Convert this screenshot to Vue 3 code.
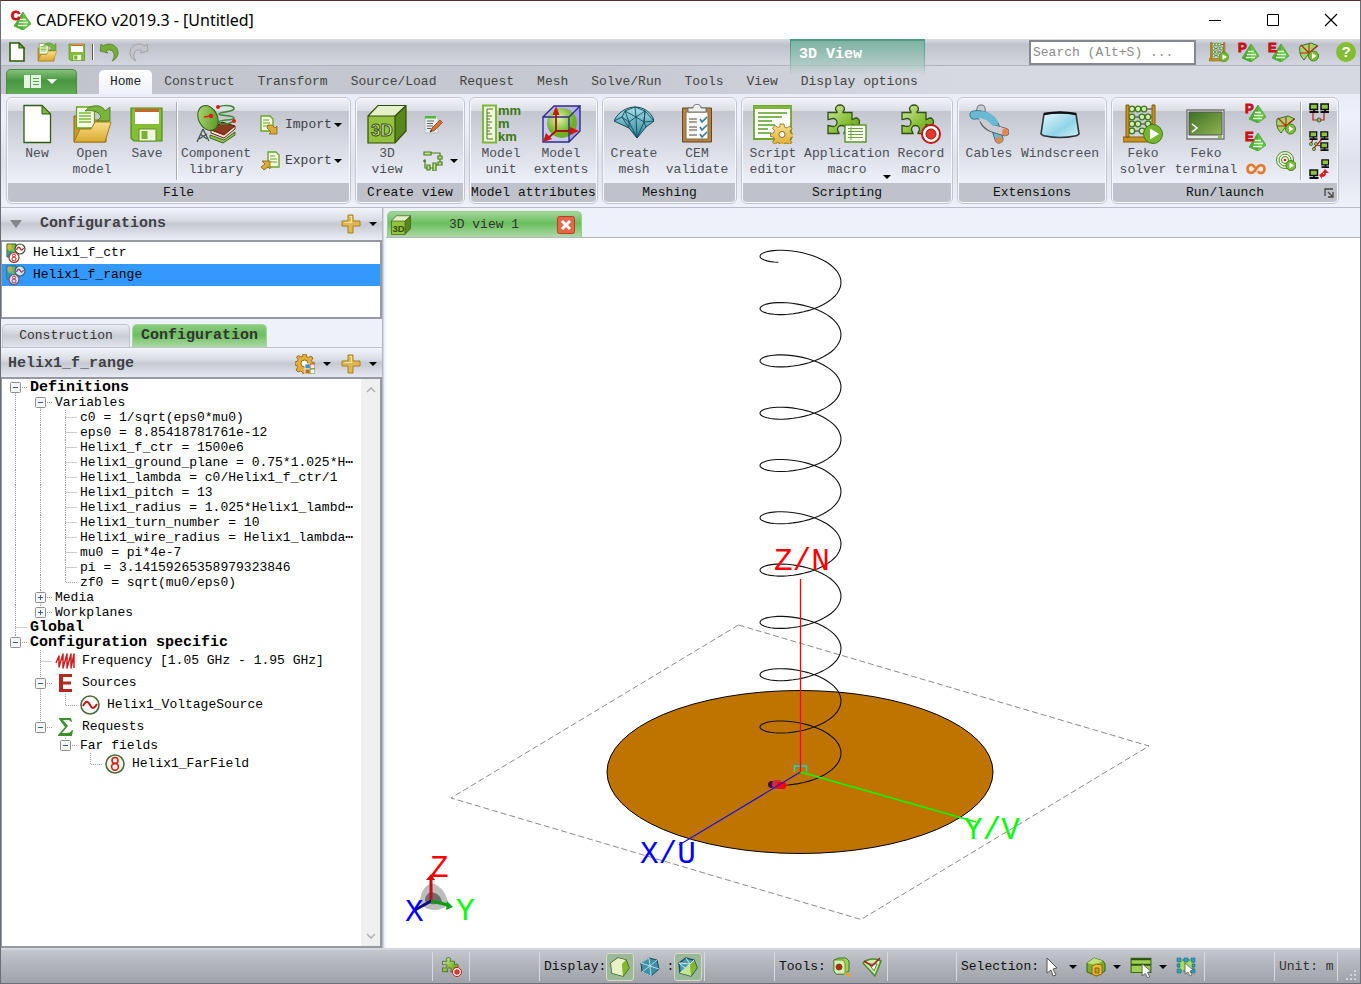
<script setup>
const tabs = ['Home', 'Construct', 'Transform', 'Source/Load', 'Request', 'Mesh', 'Solve/Run', 'Tools', 'View', 'Display options']

const variables = [
  'c0 = 1/sqrt(eps0*mu0)',
  'eps0 = 8.85418781761e-12',
  'Helix1_f_ctr = 1500e6',
  'Helix1_ground_plane = 0.75*1.025*H⋯',
  'Helix1_lambda = c0/Helix1_f_ctr/1',
  'Helix1_pitch = 13',
  'Helix1_radius = 1.025*Helix1_lambd⋯',
  'Helix1_turn_number = 10',
  'Helix1_wire_radius = Helix1_lambda⋯',
  'mu0 = pi*4e-7',
  'pi = 3.14159265358979323846',
  'zf0 = sqrt(mu0/eps0)',
]

// Cell codes: "-" open node, "+" closed node, "|" passing line, "t" branch, "l" last branch, " " blank.
// A suffix after the kind gives the line above (a) and below (b) a node box.
const rows = [
  { cells: ['-b'], text: 'Definitions', bold: true },
  { cells: ['|', '-b'], text: 'Variables' },
  ...variables.map((text, i) => ({ cells: ['|', '|', i === variables.length - 1 ? 'l' : 't'], text })),
  { cells: ['|', '+ab'], text: 'Media' },
  { cells: ['|', '+a'], text: 'Workplanes' },
  { cells: ['t'], text: 'Global', bold: true },
  { cells: ['-a'], text: 'Configuration specific', bold: true },
  { cells: [' ', 't'], text: 'Frequency [1.05 GHz - 1.95 GHz]', icon: 'freq' },
  { cells: [' ', '-ab'], text: 'Sources', icon: 'source' },
  { cells: [' ', '|', 'l'], text: 'Helix1_VoltageSource', icon: 'voltage' },
  { cells: [' ', '-a'], text: 'Requests', icon: 'sigma' },
  { cells: [' ', ' ', '-a'], text: 'Far fields' },
  { cells: [' ', ' ', ' ', 'l'], text: 'Helix1_FarField', icon: 'farfield' },
]

function cellPath(c, h) {
  const m = Math.floor(h / 2) + 0.5
  if (c === ' ') return ''
  if (c === '|') return `M12.5 0V${h}`
  if (c === 't') return `M12.5 0V${h}M12.5 ${m}H24`
  if (c === 'l') return `M12.5 0V${m}H24`
  let d = `M19 ${m}H25`
  if (c.includes('a')) d += `M12.5 0V${m - 6}`
  if (c.includes('b')) d += `M12.5 ${m + 6}V${h}`
  return d
}

const turns = 10
const steps = 48
const points = []
for (let i = 0; i <= turns * steps; i++) {
  const t = i / steps
  const a = ((123 - 360 * t) * Math.PI) / 180
  points.push(`${(800.5 + 40.5 * Math.cos(a)).toFixed(1)},${(771 + 17 * Math.sin(a) - 52.3 * t).toFixed(1)}`)
}
const helix = points.join(' ')
</script>

<template>
  <div class="window">
    <svg class="sprite" aria-hidden="true">
      <defs>
        <linearGradient id="gGreen" x1="0" y1="0" x2="1" y2="1"><stop offset="0" stop-color="#b9de7a" /><stop offset="1" stop-color="#4f8f1c" /></linearGradient>
        <linearGradient id="gPuz" x1="0" y1="0" x2="1" y2="1"><stop offset="0" stop-color="#d3e7a9" /><stop offset=".6" stop-color="#86bd33" /><stop offset="1" stop-color="#5f9a1d" /></linearGradient>
        <linearGradient id="gGold" x1="0" y1="0" x2="0" y2="1"><stop offset="0" stop-color="#f7e08f" /><stop offset="1" stop-color="#dba92c" /></linearGradient>
        <linearGradient id="gTerm" x1="0" y1="0" x2="1" y2="1"><stop offset="0" stop-color="#3f6f24" /><stop offset="1" stop-color="#8fb554" /></linearGradient>
        <linearGradient id="gGlass" x1="0" y1="0" x2="1" y2="1"><stop offset="0" stop-color="#e8f8fc" /><stop offset=".6" stop-color="#8fd4e8" /><stop offset="1" stop-color="#d9f2f8" /></linearGradient>
        <linearGradient id="gDia" x1="0" y1="0" x2="0" y2="1"><stop offset="0" stop-color="#a9dfe9" /><stop offset="1" stop-color="#2c8399" /></linearGradient>
        <radialGradient id="gBall" cx=".4" cy=".35"><stop offset="0" stop-color="#e2f3b0" /><stop offset="1" stop-color="#6fae26" /></radialGradient>
      </defs>
      <symbol id="i-new" viewBox="0 0 40 40"><path d="M7 1.500H25L33.500 10V38.500H7z" fill="#fff" stroke="#2f5c10" stroke-width="1.300" /><path d="M25 1.500V10h8.500z" fill="#7eb83a" stroke="#2f5c10" /></symbol>
      <symbol id="i-newq" viewBox="0 0 20 20"><path d="M3 1h9l5 5v13H3z" fill="#fff" stroke="#2f5c10" stroke-width="1.600" /><path d="M12 1v5h5z" fill="#7eb83a" stroke="#2f5c10" stroke-width="1.200" /></symbol>
      <symbol id="i-open" viewBox="0 0 40 40"><path d="M2 12h7l3 4h22v22H2z" fill="#c59a2d" stroke="#86651a" /><path d="M4.500 3h15l3 3v18h-18z" fill="#f5fae8" stroke="#6aa51e" stroke-width="1.300" /><path d="M7 9h12M7 12h12M7 15h12M7 18h12" stroke="#7fb83a" stroke-width="1.600" /><path d="M13 7C20-1 31 1 33 7l5-4v14H25l4-4c-2-6-9-7-16-6z" fill="#79b43c" stroke="#3f741b" stroke-width=".8" /><path d="M8 25h11l4-7h16l-6 20H2z" fill="url(#gGold)" stroke="#a27818" /></symbol>
      <symbol id="i-save" viewBox="0 0 40 40"><path d="M4 4h31v33H7l-3-3z" fill="#86bd36" stroke="#4f8a19" stroke-width="1.200" /><path d="M8 5h24v15H8z" fill="#fff" /><path d="M8 5h24v3H8z" fill="#c8642c" /><path d="M12 25h17v12H12z" fill="#eef6e0" stroke="#5c961f" /><path d="M14.500 27h6v8h-6z" fill="#7ab230" /></symbol>
      <symbol id="i-complib" viewBox="0 0 40 40"><path d="M15 26l11-8 13 4-11 9z" fill="#8a3a20" stroke="#501c0c" /><path d="M15 26v3l13 5 11-9v-3l-11 9z" fill="#efe4d0" stroke="#70240f" /><path d="M14 31v3l13 5 12-8v-3l-11 8z" fill="#8fc04a" stroke="#3a6a1a" /><path d="M22 3c8-3 17-1 16 2s-15 3-15 5 15 1 15 4-15 1-15 4 10 3 14-1" fill="none" stroke="#3c8a2f" stroke-width="1.600" /><circle cx="22" cy="3" r="2" fill="#d91e1e" /><circle cx="38" cy="17" r="2" fill="#d91e1e" /><ellipse cx="12" cy="14" rx="9.500" ry="13" transform="rotate(-25 12 14)" fill="url(#gGreen)" stroke="#2d5f12" /><path d="M8 13l7-1" stroke="#d21" stroke-width="1.500" /><circle cx="15" cy="12" r="2.200" fill="#d91e1e" /><path d="M7 25L1 38M7 25l6 12M3 35l8-5M11 35l-7-5" stroke="#455" stroke-width="1.300" fill="none" /></symbol>
      <symbol id="i-import" viewBox="0 0 20 20"><path d="M1 1h9l3 3v12H1z" fill="#f2f8e4" stroke="#6da72a" stroke-width="1.400" /><path d="M3 5h6M3 8h7M3 11h5" stroke="#6da72a" /><path d="M8 10h4l3 3 2-2v8H9l2-2-4-4z" fill="#e0a92f" stroke="#80601a" stroke-width=".8" /></symbol>
      <symbol id="i-export" viewBox="0 0 20 20"><path d="M8 1h8l3 3v12H8z" fill="#f2f8e4" stroke="#6da72a" stroke-width="1.400" /><path d="M10 5h5M10 8h7M10 11h7" stroke="#6da72a" /><path d="M2 10h8v8l-2-2-4 3-3-3 4-3z" fill="#e0a92f" stroke="#80601a" stroke-width=".8" /></symbol>
      <symbol id="i-3d" viewBox="0 0 40 40"><path d="M1 12h27v27H1z" fill="#95c13e" /><path d="M1 12L11 1.500h28L28 12z" fill="#e4f0c8" /><path d="M28 12L39 1.500V27L28 39z" fill="#5b861b" /><path d="M1 12L11 1.500h28V27L28 39H1zM1 12h27v27M28 12L39 1.500" fill="none" stroke="#2f4d0c" stroke-width="1.200" /></symbol>
      <symbol id="i-edit" viewBox="0 0 20 20"><path d="M2 2h13v16H2z" fill="#e8ebee" stroke="#b9bdc5" /><path d="M2 1h11v2.500H2z" fill="#4fb83a" /><path d="M4 6h7M4 8.500h6M4 11h6M4 13.500h4" stroke="#666" /><path d="M7 17l2-4 8-8 2.500 2.500-8 8z" fill="#d8702b" stroke="#7d3d14" stroke-width=".7" /><path d="M7 17l1-2 1 1z" fill="#222" /></symbol>
      <symbol id="i-schem" viewBox="0 0 20 20"><g fill="#c5e28f" stroke="#4b7d1a" stroke-width="1.200"><path d="M1 1h7v3H1zM15 5h4v3h-4zM15 11h4v3h-4zM4 14h3v5H4zM10 12h3v8h-3z" /><path d="M8 2h9v3M17 8v3M1 9h1v8h2M7 17h3M13 14h2" fill="none" /></g><circle cx="1.500" cy="10" r="1.300" fill="#4b7d1a" /></symbol>
      <symbol id="i-unit" viewBox="0 0 40 40"><path d="M2 1.500h13v37H2z" fill="#f0f7df" stroke="#7eb73a" stroke-width="2" /><path d="M6 5v30M6 5h6M6 9h3M6 12h5M6 15h3M6 18h5M6 21h3M6 24h5M6 27h3M6 30h5M6 35h6" stroke="#4b7d1a" fill="none" /></symbol>
      <symbol id="i-extents" viewBox="0 0 40 40"><path d="M2 13L13 2h26L28 13z" fill="#b9b6ee" /><path d="M28 13L39 2v25L28 38z" fill="#a5a2e6" /><path d="M2 13h26v25H2z" fill="#c9c8f2" /><circle cx="21" cy="19" r="15" fill="url(#gBall)" /><path d="M2 13h26v25H2zM2 13L13 2h26L28 13M39 2v25L28 38" fill="none" stroke="#2f2b8c" stroke-width="1.400" /><path d="M15 27V6M15 27h17M15 27L5 36" stroke="#a5140c" stroke-width="1.800" /><path d="M15 2l-3.500 9h7zM38 27l-9-4v8zM2 38l3-9 6 6z" fill="#c9180e" /></symbol>
      <symbol id="i-diamond" viewBox="0 0 40 40"><path d="M0 17C4 8 13 3 21 3s17 5 19 14L32 23 23 34 15 24z" fill="url(#gDia)" stroke="#114b5c" /><path d="M0 17l8-4 7 5 7-5 8 5 10-1M8 13l3-6 11 6 9-6-1 11M11 7l10-4 10 4M15 24V18l8 16 7-16 2 5M22 13l1 21M11 7l4 11M8 13l7 11M30 18l1-11 9 10M21 3l1 10" fill="none" stroke="#114b5c" stroke-width=".9" /></symbol>
      <symbol id="i-clip" viewBox="0 0 40 40"><path d="M5.500 4h29v34h-29z" fill="#b28247" stroke="#694518" /><path d="M9 8h22v27H9z" fill="#fafafa" stroke="#8a6a3c" /><path d="M11 4h5c0-5 8-5 8 0h5v4H11z" fill="#eee" stroke="#6e6e6e" /><path d="M12 15h8M12 18h8M12 23h8M12 26h8M12 31h8" stroke="#8a857c" stroke-width="1.400" /><path d="M23 15l2 3 5-5M23 23l2 3 5-5M23 30l2 3 5-5" fill="none" stroke="#2f8094" stroke-width="1.700" /></symbol>
      <symbol id="i-script" viewBox="0 0 40 40"><path d="M1 2h37v33H1z" fill="#fff" stroke="#6da72a" stroke-width="1.800" /><path d="M1 2h37v3H1z" fill="#7db63a" /><path d="M5 9h29M5 13h24M5 17h14M5 21h17M5 25h10M5 29h13" stroke="#5d9a25" stroke-width="1.500" /><g transform="translate(29 30)"><path d="M-2-10h4l.500 3 2.500 1 2.500-2 2.500 2.500-2 2.500 1 2.500 3 .500v3l-3 .500-1 2.500 2 2.500-2.500 2-3-1.500-2 .500-.500 3h-3l-1-3-2.500-1-2.500 2-2.500-2.500 2-2.500-1-2.500-3-.500v-3l3-.500 1-2.500-2-2.500 2.500-2.500 3 2 2-1z" fill="url(#gGold)" stroke="#8a651a" stroke-width=".8" /><circle cx="0" cy=".500" r="3" fill="#fff" stroke="#8a651a" /></g></symbol>
      <symbol id="p-puzzle" viewBox="0 0 40 40"><path d="M1 8.500H10C10 7 8.500 6.500 8.500 5a4.500 4 0 0 1 9 0c0 1.500-1.500 2-1.500 3.500h9v7c2 0 2-1.500 4-1.500a3.500 4 0 0 1 0 8c-2 0-2-1.500-4-1.500v9h-8c0-2 1.500-2 1.500-4a4 4 0 0 0-8 0c0 2 1.500 2 1.500 4H1v-8c3 0 3 1 5 1a4 4 0 0 0 0-8c-2 0-2 1-5 1z" fill="url(#gPuz)" stroke="#2f4f14" stroke-width="1.300" /></symbol>
      <symbol id="i-app" viewBox="0 0 40 40"><use href="#p-puzzle" /><path d="M18 21h21v17H18z" fill="#fbfdf5" stroke="#5f962a" stroke-width="1.500" /><path d="M21 24.500h15M21 27.500h15M21 30.500h15M21 33.500h15M24 23v13" stroke="#6da338" /></symbol>
      <symbol id="i-record" viewBox="0 0 40 40"><use href="#p-puzzle" /><circle cx="30" cy="30" r="9" fill="#fff" stroke="#c31515" stroke-width="2" /><circle cx="30" cy="30" r="5" fill="#e03a30" stroke="#a81010" /></symbol>
      <symbol id="i-cables" viewBox="0 0 40 40"><g fill="none" stroke-linecap="round"><path d="M12 5v6" stroke="#555" stroke-width="9" /><path d="M12 5v6" stroke="#c9ccd0" stroke-width="7.500" /><path d="M5 11c12-1 15 3 21 11l4 13" stroke="#1b637c" stroke-width="9" /><path d="M5 11c12-1 15 3 21 11l4 13" stroke="#68b9d2" stroke-width="7.500" /><path d="M15 17c4 8 12 8 21 11" stroke="#555" stroke-width="8.500" /><path d="M14 15c5 10 13 10 22 13" stroke="#c9ccd0" stroke-width="7" /><path d="M14 11c5 1 8 3 11 7" stroke="#68b9d2" stroke-width="7.500" /></g><ellipse cx="36" cy="28" rx="3" ry="3.500" fill="#ef8343" /><ellipse cx="30" cy="36" rx="3.500" ry="3" fill="#ef8343" /></symbol>
      <symbol id="i-wind" viewBox="0 0 40 40"><path d="M4 10q16-3 32 0l3 20q-2 2-4 2-15 3-30 0-2 0-4-2z" fill="url(#gGlass)" stroke="#2f3335" stroke-width="1.600" /><path d="M4 10q16-3 32 0" stroke="#111" stroke-width="2.400" fill="none" /></symbol>
      <symbol id="i-abacus" viewBox="0 0 40 40"><path d="M4 5h26M4 13h26M4 20h26M4 27h26" stroke="#333" stroke-width="1.200" /><g fill="#d4e8b4" stroke="#3f7a1c" stroke-width="1.300"><circle cx="9" cy="5" r="2.800" /><circle cx="15" cy="5" r="2.800" /><circle cx="21" cy="5" r="2.800" /><circle cx="9" cy="13" r="2.800" /><circle cx="19" cy="13" r="2.800" /><circle cx="25" cy="13" r="2.800" /><circle cx="9" cy="20" r="2.800" /><circle cx="15" cy="20" r="2.800" /><circle cx="25" cy="20" r="2.800" /><circle cx="9" cy="27" r="2.800" /><circle cx="19" cy="27" r="2.800" /></g><path d="M3 1h3v32H3zM29 1h3v32h-3zM0 33h32v5H0z" fill="#c69320" stroke="#7e5c10" /><circle cx="30" cy="30" r="9.500" fill="#78b52e" stroke="#3f7a1c" /><path d="M27 24.500v11l9-5.500z" fill="#fff" /></symbol>
      <symbol id="i-term" viewBox="0 0 40 40"><path d="M1 6h37v29H1z" fill="#e6e8e6" stroke="#777" stroke-width="1.400" /><path d="M3 8h33v23H3z" fill="url(#gTerm)" stroke="#555" /><path d="M6 20l5 4-5 4" fill="none" stroke="#fff" stroke-width="1.600" /><path d="M32 33h4" stroke="#6db32a" stroke-width="1.500" /></symbol>
      <symbol id="p-pyr" viewBox="0 0 20 20"><path d="M12 2l8 12-8 6-9-4z" fill="#67c443" stroke="#2f8f24" stroke-width=".6" /><path d="M12 2v18l-9-4z" fill="#4fae36" /><path d="M9 9.500h6M8 12.500h9M7 15.500h9" stroke="#e6f9dc" stroke-width="1.400" /></symbol>
      <symbol id="i-optf" viewBox="0 0 20 20"><path d="M1 4l11-3 7 3-8 6-6 8C1 14 0 9 1 4z" fill="#a6d46b" stroke="#3d6f1c" /><path d="M2 3l8 8M10 11V2M10 11H1M10 11l8-7" stroke="#c0231a" stroke-width="1.100" /><circle cx="14.500" cy="14" r="5" fill="#7ebb3a" stroke="#47801c" /><path d="M13 11v6l4.500-3z" fill="#fff" /></symbol>
      <symbol id="i-rings" viewBox="0 0 20 20"><g fill="#eef7e2" stroke="#4d8a2a"><circle cx="9" cy="9" r="8.500" /><circle cx="9" cy="9" r="6" /><circle cx="9" cy="9" r="3.500" /></g><circle cx="9" cy="9" r="1.300" fill="#d22" /><circle cx="15" cy="14.500" r="5" fill="#7ebb3a" stroke="#47801c" /><path d="M13.500 11.500v6l4.500-3z" fill="#fff" /></symbol>
      <symbol id="i-loop" viewBox="0 0 20 20"><path d="M8.500 8C6 4 1.500 6 1.500 10s5 6 8.500 0 8.500-4 8.500 0c0 4-4 5-6 3" fill="none" stroke="#e5792a" stroke-width="2.600" stroke-linecap="round" /></symbol>
      <symbol id="p-pc" viewBox="0 0 10 10"><path d="M1 1h7.500v5.500H1z" fill="#8cc63f" stroke="#111" stroke-width="1.500" /><path d="M.500 9h9M5 6v3" stroke="#111" stroke-width="1.800" /></symbol>
      <symbol id="i-net1" viewBox="0 0 20 20"><path d="M4 9v8h11V9" fill="none" stroke="#b81d1d" stroke-width="1.200" /><use href="#p-pc" width="10" height="10" /><use href="#p-pc" x="11" width="10" height="10" /><circle cx="10" cy="17" r="2" fill="#8cc63f" stroke="#333" stroke-width=".8" /></symbol>
      <symbol id="i-net2" viewBox="0 0 20 20"><path d="M4 8L2 13M4 18l10-11M8 14l8 2" stroke="#b81d1d" stroke-width="1.200" /><use href="#p-pc" width="9" height="9" /><use href="#p-pc" x="11" width="9" height="9" /><use href="#p-pc" x="11" y="11" width="9" height="9" /><circle cx="2" cy="13" r="1.600" fill="#8cc63f" stroke="#333" stroke-width=".6" /><circle cx="5" cy="18" r="1.600" fill="#8cc63f" stroke="#333" stroke-width=".6" /><circle cx="7" cy="13" r="1.600" fill="#8cc63f" stroke="#333" stroke-width=".6" /></symbol>
      <symbol id="i-net3" viewBox="0 0 20 20"><use href="#p-pc" x="12" width="9" height="9" /><use href="#p-pc" y="10" width="10" height="10" /><path d="M16 10l4 4h-3c0 3-2 4-4 4v2l-3-4 4-3v2c1 0 1-1 1-1h-2z" fill="#d5202a" /></symbol>
      <symbol id="i-undo" viewBox="0 0 20 20"><path d="M1 9L2 2l2 2c7-5 16 0 15 8-1 4-3 6-6 7 3-4 3-10-2-11-2 0-3 0-4 1l2 2z" fill="#77ab35" stroke="#3f7018" stroke-width=".6" /></symbol>
      <symbol id="i-redo" viewBox="0 0 20 20"><path d="M19 9l-1-7-2 2C9-1 0 4 1 12c1 4 3 6 6 7-3-4-3-10 2-11 2 0 3 0 4 1l-2 2z" fill="#c3c4c7" stroke="#9a9b9e" stroke-width=".8" /></symbol>
      <symbol id="i-plus" viewBox="0 0 20 20"><path d="M7 1h5v6h7v5h-7v7H7v-7H1V7h6z" fill="#e1b850" stroke="#a67f22" /><path d="M8.500 2.500h2v6h-7" fill="none" stroke="#f6e2a2" stroke-width="1.200" /></symbol>
      <symbol id="i-gear" viewBox="0 0 20 20"><path d="M8 0h3l.500 2.500 2 1L16 2l2 2-1.500 2.500 1 2L20 9v3l-2.500.500-1 2L18 17l-2 2-2.500-1.500-2 1L11 20H8l-.500-2-2-1L3 18l-2-2 1.500-2.500L2 11.500 0 11V8l2-.500 1-2L1.500 3 3.500 1.500 6 3l1.500-.500z" fill="#e2b03a" stroke="#8a641a" stroke-width=".9" /><circle cx="9.500" cy="9.500" r="3.500" fill="#fff" stroke="#8a641a" /><path d="M10 10h5v5h-5z" fill="#3492c8" stroke="#fff" stroke-width=".8" /><path d="M15 10h5v5h-5z" fill="#eee" stroke="#d05020" /><path d="M10 15h5v5h-5z" fill="#c8691e" stroke="#fff" stroke-width=".8" /><path d="M15 15h5v5h-5z" fill="#fff" stroke="#4ea52a" /></symbol>
      <symbol id="i-config" viewBox="0 0 20 20"><path d="M1 1h9v13H1z" fill="#7bc043" stroke="#1c5c2a" /><path d="M1.500 1.500h4v5h-4z" fill="#e8b62a" /><path d="M1.500 8h5v6h-5z" fill="#2f9ca5" /><circle cx="14" cy="6" r="5" fill="#fff" stroke="#35502f" stroke-width="1.200" /><path d="M10.500 7c1.500-4 3-3 4-1s2 1 3-1" fill="none" stroke="#d02020" stroke-width="1.300" /><circle cx="8" cy="14.500" r="5" fill="#fff" stroke="#a33328" stroke-width="1.200" /><circle cx="8" cy="12.500" r="1.500" fill="none" stroke="#d02020" /><circle cx="8" cy="16" r="2" fill="none" stroke="#d02020" /></symbol>
      <symbol id="i-freq" viewBox="0 0 20 20"><path d="M1 12l3-7v11L8 3v14l4-14v14l4-14v14l3-14v14" fill="none" stroke="#cf1f1f" stroke-width="1.500" stroke-linejoin="round" /></symbol>
      <symbol id="i-source" viewBox="0 0 20 20"><path d="M4 1h13v3H8v4.500h8v3H8V16h9v3H4z" fill="#b0281f" /></symbol>
      <symbol id="i-voltage" viewBox="0 0 20 20"><circle cx="10" cy="10" r="9" fill="#fdfdfb" stroke="#4d6a3a" stroke-width="1.600" /><path d="M3 11c3-6 5-5 7-1s4 4 7-1" fill="none" stroke="#c8181b" stroke-width="2" /></symbol>
      <symbol id="i-sigma" viewBox="0 0 20 20"><path d="M4 1h12l1 4h-1c-1-2-2-2-8-2l5 6-6 7c8 0 8 0 10-3h1l-1 6H3v-1l7-8-6-8z" fill="#3c8f2a" /></symbol>
      <symbol id="i-farfield" viewBox="0 0 20 20"><circle cx="10" cy="10" r="9" fill="#f3f8e6" stroke="#4d6a3a" stroke-width="1.600" /><circle cx="10" cy="6.500" r="3" fill="none" stroke="#cf1f1f" stroke-width="1.600" /><circle cx="10" cy="12.800" r="3.400" fill="none" stroke="#cf1f1f" stroke-width="1.600" /></symbol>
      <symbol id="i-solid" viewBox="0 0 20 20"><path d="M1 6l7-5 8 2 3 8-6 8-11-3z" fill="#9ccb4b" stroke="#3b5c17" stroke-width="1.400" /><path d="M1 6l7-5 8 2-4 4 1 12-11-3z" fill="#e6f3c6" /><path d="M16 3l3 8-6 8-1-12z" fill="#84b82f" /></symbol>
      <symbol id="i-meshs" viewBox="0 0 20 20"><path d="M1 6l8-5 8 2 2 9-8 7-9-4z" fill="#3f90a6" stroke="#12485a" /><path d="M1 6l9 3 7-6M10 9l1 10M9 1l1 8-8 6M10 9l9 3M9 1L1 6M2 15l9 4" fill="none" stroke="#bfe3ea" stroke-width=".9" /></symbol>
      <symbol id="i-mixed" viewBox="0 0 20 20"><path d="M1 6l7-5 8 2 3 8-6 8-11-3z" fill="#4d9bb0" stroke="#1d4d58" stroke-width="1.400" /><path d="M16 3l3 8-6 8-1-12z" fill="#84b82f" /><path d="M12 7L2 16l11 3z" fill="#c6e48c" /><path d="M1 6l11 1 4-4M8 1l4 6-10 9M1 6l6 5" fill="none" stroke="#dcf0f3" stroke-width=".9" /></symbol>
      <symbol id="i-tape" viewBox="0 0 20 20"><path d="M2 3l5-2h7l3 3v10l-6 3H4l-2-3z" fill="#9fd052" stroke="#3f7a1c" /><path d="M2 3h9l2 3v11H4l-2-3z" fill="#d7edb4" stroke="#3f7a1c" stroke-width=".7" /><circle cx="7" cy="10" r="3" fill="#c81c1c" stroke="#650" /><path d="M13 16l6 3" stroke="#e0a72c" stroke-width="2.500" /></symbol>
      <symbol id="i-angle" viewBox="0 0 20 20"><path d="M1 6c5-5 13-5 18-2l-6 15z" fill="#d4ecae" stroke="#4d8a2a" stroke-width="1.500" /><path d="M7 7h8l-3 7z" fill="#fff" stroke="#4d8a2a" /><path d="M2 4l8 5 8-8" fill="none" stroke="#a32020" stroke-width="1.500" /></symbol>
      <symbol id="i-cursor" viewBox="0 0 20 20"><path d="M5 1v15l4-3 2 6 3-1-3-6 4-1z" fill="#fff" stroke="#555" /></symbol>
      <symbol id="i-boxes" viewBox="0 0 20 20"><path d="M1 6l7-5 9 3 2 3v7l-8 5-10-4z" fill="#79b32a" stroke="#3b5c17" /><path d="M1 6l7-5 9 3-8 4z" fill="#bde27c" /><path d="M6 9l4-2 6 1v9l-6 2-4-2z" fill="#e8bd35" stroke="#8a651a" /><path d="M9 11h4v5H9z" fill="#c99a22" stroke="#8a651a" /></symbol>
      <symbol id="i-table" viewBox="0 0 20 20"><path d="M1 2h18v13H1z" fill="#9fd052" stroke="#3b6b17" /><path d="M1 3h18M1 8h18" stroke="#2c5212" stroke-width="1.800" /><path d="M11 7v11l3-2 2 4 2-1-2-4 3-1z" fill="#fff" stroke="#555" stroke-width=".8" /></symbol>
      <symbol id="i-region" viewBox="0 0 20 20"><path d="M3 3h14v11H3z" fill="#a9d968" stroke="#3f7a1c" stroke-dasharray="2 1" /><g fill="#2ba4c4" stroke="#125c70" stroke-width=".5"><path d="M1 1h4v4H1zM8 1h4v4H8zM15 1h4v4h-4zM1 12h4v4H1zM15 12h4v4h-4zM1 7h3v3H1zM16 7h3v3h-3z" /></g><path d="M9 6v11l3-2 2 4 2-1-2-4 3-1z" fill="#fff" stroke="#555" stroke-width=".8" /></symbol>
    </svg>

    <header class="title">
      <svg class="s20" viewBox="0 0 20 20"><use href="#p-pyr" /><text class="letter" x="0" y="10">C</text></svg>
      <h1>CADFEKO v2019.3 - [Untitled]</h1>
      <div class="winbtns">
        <button aria-label="Minimise"><svg width="14" height="14"><path d="M1 7.500h12" stroke="#000" /></svg></button>
        <button aria-label="Maximise"><svg width="14" height="14"><path d="M1.500 1.500h11v11h-11z" fill="none" stroke="#000" /></svg></button>
        <button aria-label="Close"><svg width="14" height="14"><path d="M1 1l12 12M13 1L1 13" stroke="#000" stroke-width="1.200" /></svg></button>
      </div>
    </header>

    <div class="quick">
      <button aria-label="New"><svg class="s20"><use href="#i-newq" /></svg></button>
      <button aria-label="Open"><svg class="s20"><use href="#i-open" /></svg></button>
      <button aria-label="Save"><svg class="s20"><use href="#i-save" /></svg></button>
      <i class="bar"></i>
      <button aria-label="Undo"><svg class="s20"><use href="#i-undo" /></svg></button>
      <button aria-label="Redo"><svg class="s20"><use href="#i-redo" /></svg></button>
      <div class="qright">
        <input type="search" placeholder="Search (Alt+S) ..." aria-label="Search" />
        <button aria-label="Feko solver"><svg class="s20"><use href="#i-abacus" /></svg></button>
        <button aria-label="Postfeko"><svg class="s20" viewBox="0 0 20 20"><use href="#p-pyr" /><text class="letter" x="-1" y="10">P</text></svg></button>
        <button aria-label="Editfeko"><svg class="s20" viewBox="0 0 20 20"><use href="#p-pyr" /><text class="letter" x="-1" y="10">E</text></svg></button>
        <button aria-label="Optfeko"><svg class="s20"><use href="#i-optf" /></svg></button>
        <button class="help" aria-label="Help">?</button>
      </div>
      <div class="context">3D View</div>
    </div>

    <nav class="tabs">
      <button class="appmenu" aria-label="Application menu">
        <svg width="34" height="16"><path d="M1 1h17v13H1z" fill="#e5f4e2" /><path d="M7.500 1v13M10 4.500h6M10 7.500h6M10 10.500h6" stroke="#5aa354" fill="none" /><path d="M24 5h10l-5 5z" fill="#fff" /></svg>
      </button>
      <button v-for="(t, i) in tabs" :key="t" class="tab" :class="{ on: i === 0 }">{{ t }}</button>
    </nav>

    <section class="ribbon">
      <div class="group file">
        <div class="body">
          <button class="big w58"><svg class="s40"><use href="#i-new" /></svg>New</button>
          <button class="big w52"><svg class="s40"><use href="#i-open" /></svg>Open<br />model</button>
          <button class="big w58"><svg class="s40"><use href="#i-save" /></svg>Save</button>
          <i class="sep"></i>
          <button class="big w76"><svg class="s40"><use href="#i-complib" /></svg>Component<br />library</button>
          <div class="col">
            <button class="row"><svg class="s20"><use href="#i-import" /></svg>Import<i class="arr"></i></button>
            <button class="row"><svg class="s20"><use href="#i-export" /></svg>Export<i class="arr"></i></button>
          </div>
        </div>
        <h2>File</h2>
      </div>
      <div class="group create">
        <div class="body">
          <button class="big w60"><svg class="s40" viewBox="0 0 40 40"><use href="#i-3d" /><text class="cube" x="4" y="32">3D</text></svg>3D<br />view</button>
          <div class="col">
            <button class="row" aria-label="Notes"><svg class="s20"><use href="#i-edit" /></svg></button>
            <button class="row" aria-label="Schematic"><svg class="s20"><use href="#i-schem" /></svg><i class="arr"></i></button>
          </div>
        </div>
        <h2>Create view</h2>
      </div>
      <div class="group model">
        <div class="body">
          <button class="big w60"><svg class="s40" viewBox="0 0 40 40"><use href="#i-unit" /><text class="units" x="17" y="11">mm</text><text class="units" x="17" y="24">m</text><text class="units" x="17" y="37">km</text></svg>Model<br />unit</button>
          <button class="big w60"><svg class="s40"><use href="#i-extents" /></svg>Model<br />extents</button>
        </div>
        <h2>Model attributes</h2>
      </div>
      <div class="group mesh">
        <div class="body">
          <button class="big w60"><svg class="s40"><use href="#i-diamond" /></svg>Create<br />mesh</button>
          <button class="big w66"><svg class="s40"><use href="#i-clip" /></svg>CEM<br />validate</button>
        </div>
        <h2>Meshing</h2>
      </div>
      <div class="group script">
        <div class="body">
          <button class="big w60"><svg class="s40"><use href="#i-script" /></svg>Script<br />editor</button>
          <button class="big w88"><svg class="s40"><use href="#i-app" /></svg>Application<br />macro<i class="arr corner"></i></button>
          <button class="big w60"><svg class="s40"><use href="#i-record" /></svg>Record<br />macro</button>
        </div>
        <h2>Scripting</h2>
      </div>
      <div class="group ext">
        <div class="body">
          <button class="big w60"><svg class="s40"><use href="#i-cables" /></svg>Cables</button>
          <button class="big w82"><svg class="s40"><use href="#i-wind" /></svg>Windscreen</button>
        </div>
        <h2>Extensions</h2>
      </div>
      <div class="group run">
        <div class="body">
          <button class="big w60"><svg class="s40"><use href="#i-abacus" /></svg>Feko<br />solver</button>
          <button class="big w66"><svg class="s40"><use href="#i-term" /></svg>Feko<br />terminal</button>
          <div class="col three">
            <button aria-label="Postfeko"><svg class="s20" viewBox="0 0 20 20"><use href="#p-pyr" /><text class="letter" x="-1" y="10">P</text></svg></button>
            <button aria-label="Editfeko"><svg class="s20" viewBox="0 0 20 20"><use href="#p-pyr" /><text class="letter" x="-1" y="10">E</text></svg></button>
            <button aria-label="Newfasant"><svg class="s20"><use href="#i-loop" /></svg></button>
          </div>
          <div class="col two">
            <button aria-label="Optfeko"><svg class="s20"><use href="#i-optf" /></svg></button>
            <button aria-label="WinProp"><svg class="s20"><use href="#i-rings" /></svg></button>
          </div>
          <i class="sep"></i>
          <div class="col three">
            <button aria-label="Cluster"><svg class="s20"><use href="#i-net1" /></svg></button>
            <button aria-label="Parallel"><svg class="s20"><use href="#i-net2" /></svg></button>
            <button aria-label="Remote"><svg class="s20"><use href="#i-net3" /></svg></button>
          </div>
        </div>
        <h2>Run/launch<svg class="launcher" width="10" height="10"><path d="M1 8V1h8M4 4l4 4M9 4v5H4" fill="none" stroke="#444" stroke-width="1.300" /></svg></h2>
      </div>
    </section>

    <main class="work">
      <aside class="side">
        <div class="phead first">
          <svg width="14" height="10"><path d="M1 1h12l-6 8z" fill="#85878d" /></svg>
          <h2>Configurations</h2>
          <button aria-label="Add configuration"><svg class="s20"><use href="#i-plus" /></svg><i class="arr"></i></button>
        </div>
        <ul class="configs">
          <li><svg class="s20"><use href="#i-config" /></svg>Helix1_f_ctr</li>
          <li class="sel"><svg class="s20"><use href="#i-config" /></svg>Helix1_f_range</li>
        </ul>
        <div class="ptabs">
          <button>Construction</button>
          <button class="on">Configuration</button>
        </div>
        <div class="phead">
          <h2>Helix1_f_range</h2>
          <button aria-label="Settings"><svg class="s20"><use href="#i-gear" /></svg><i class="arr"></i></button>
          <button aria-label="Add item"><svg class="s20"><use href="#i-plus" /></svg><i class="arr"></i></button>
        </div>
        <div class="treebox">
          <ul class="tree">
            <li v-for="r in rows" :key="r.text" :class="{ tall: r.icon, bold: r.bold }">
              <svg v-for="(c, i) in r.cells" :key="i" width="25" :height="r.icon ? 22 : 15">
                <path :d="cellPath(c, r.icon ? 22 : 15)" fill="none" stroke="#9a9a9a" stroke-dasharray="1 1" />
                <g v-if="c[0] === '-' || c[0] === '+'">
                  <rect x="7.500" :y="r.icon ? 6.5 : 2.5" width="10" height="10" rx="1" fill="#f6f6f6" stroke="#8f8f8f" />
                  <path :d="`M10 ${r.icon ? 11.5 : 7.5}h5` + (c[0] === '+' ? 'M12.5 5v5' : '')" stroke="#3a5ba8" />
                </g>
              </svg>
              <svg v-if="r.icon" class="s20 ti"><use :href="'#i-' + r.icon" /></svg>
              <span>{{ r.text }}</span>
            </li>
          </ul>
          <div class="scroll">
            <svg width="12" height="8"><path d="M2 6l4-4 4 4" fill="none" stroke="#b4b4b4" stroke-width="1.600" /></svg>
            <svg width="12" height="8"><path d="M2 2l4 4 4-4" fill="none" stroke="#b4b4b4" stroke-width="1.600" /></svg>
          </div>
        </div>
      </aside>

      <section class="view">
        <div class="vtabs">
          <div class="vtab">
            <svg class="s20" viewBox="0 0 40 40"><use href="#i-3d" /><text class="cube dark" x="3" y="33">3D</text></svg>
            <span>3D view 1</span>
            <button aria-label="Close view"><svg width="18" height="18"><rect x=".500" y=".500" width="17" height="17" rx="2" fill="#e0694c" stroke="#c23a1f" /><path d="M5 5l8 8M13 5l-8 8" stroke="#fff" stroke-width="3" /></svg></button>
          </div>
        </div>
        <svg class="scene" viewBox="386 239 974 708" role="img" aria-label="Helix antenna above a ground plane">
          <path d="M738.500 625L1149 746 861 919.500 451 798z" fill="none" stroke="#8a8a8a" stroke-dasharray="6 3" />
          <ellipse cx="800" cy="772" rx="193" ry="81.500" fill="#c07400" stroke="#000" />
          <polyline :points="helix" fill="none" stroke="#111" stroke-width="1.100" />
          <path d="M794.500 772v-6h12v6" fill="none" stroke="#00e0d8" stroke-width="1.300" />
          <ellipse cx="772" cy="784.500" rx="4" ry="3.500" fill="#3a0c58" />
          <rect x="772" y="780" width="10" height="9" rx="4" fill="#d42a36" />
          <rect x="777" y="782" width="9" height="7" rx="2" fill="#f00" />
          <path d="M800.500 772L679 845" stroke="#1a12e0" stroke-width="1.200" />
          <path d="M800.500 772L976 822" stroke="#0f0" stroke-width="1.500" />
          <path d="M800.500 772V579" stroke="#f00" stroke-width="1.300" />
          <g class="axis">
            <text x="774" y="570" fill="#f00">Z/N</text>
            <text x="640" y="863" fill="#00f">X/U</text>
            <text x="964" y="839" fill="#0f0">Y/V</text>
          </g>
          <path d="M431 883c-8 4-11 11-11 20 6 8 19 10 28 2 0-10-7-20-17-22z" fill="#bdbdbd" />
          <path d="M431 892c-5 2-6 6-6 9 4 4 12 4 17 1-1-6-5-9-11-10z" fill="#6d6d6d" />
          <path d="M431 901V878" stroke="#c40c14" stroke-width="3" /><path d="M426 880l5-6 4 6z" fill="#d40c14" />
          <path d="M431 901l-16 9" stroke="#0c0c88" stroke-width="3" /><path d="M431 901l17 4" stroke="#089a10" stroke-width="3" /><path d="M447 901l6 6-7 3z" fill="#0aa814" />
          <g class="axis">
            <text x="430" y="877" fill="#f00">Z</text>
            <text x="405" y="921" fill="#00f">X</text>
            <text x="456" y="920" fill="#0f0">Y</text>
          </g>
        </svg>
      </section>
    </main>

    <footer class="status">
      <div class="cell c1"></div>
      <div class="cell c2"><button aria-label="Record macro"><svg class="s20"><use href="#i-record" /></svg></button></div>
      <div class="cell c3"></div>
      <div class="cell c4">
        <span>Display:</span>
        <button class="on" aria-label="Solid"><svg class="s20"><use href="#i-solid" /></svg></button>
        <button aria-label="Mesh"><svg class="s20"><use href="#i-meshs" /></svg></button>
        <span>:</span>
        <button class="on" aria-label="Both"><svg class="s20"><use href="#i-mixed" /></svg></button>
      </div>
      <div class="cell c5"></div>
      <div class="cell c6">
        <span>Tools:</span>
        <button aria-label="Measure distance"><svg class="s20"><use href="#i-tape" /></svg></button>
        <button aria-label="Measure angle"><svg class="s20"><use href="#i-angle" /></svg></button>
      </div>
      <div class="cell c7"></div>
      <div class="cell c8">
        <span>Selection:</span>
        <button aria-label="Pointer"><svg class="s20"><use href="#i-cursor" /></svg><i class="arr"></i></button>
        <button aria-label="Select type"><svg class="s20"><use href="#i-boxes" /></svg><i class="arr"></i></button>
        <button aria-label="Select list"><svg class="s22"><use href="#i-table" /></svg><i class="arr"></i></button>
        <button aria-label="Select region"><svg class="s20"><use href="#i-region" /></svg></button>
      </div>
      <div class="cell c9"></div>
      <div class="cell unit">Unit: m</div>
      <svg class="grip" width="12" height="12"><path d="M8 1h2v2H8zM8 5h2v2H8zM8 9h2v2H8zM4 5h2v2H4zM4 9h2v2H4zM0 9h2v2H0z" fill="#d0d2d8" /></svg>
    </footer>
  </div>
</template>

<style>
body { background: #fff; overflow: hidden; }
</style>

<style scoped>
* { box-sizing: border-box; }
.window { height: 100vh; display: flex; flex-direction: column; border: 1px solid #6b6e75; border-top-color: #5a2a2a; background: #eef1fa; font: 13px/16px "Liberation Mono", monospace; color: #333; }
button { border: 0; padding: 0; margin: 0; background: none; font: inherit; color: inherit; }
svg { display: block; flex: none; overflow: visible; }
h1, h2, ul { margin: 0; padding: 0; font: inherit; list-style: none; }
.sprite { position: absolute; width: 0; height: 0; }
.s20 { width: 20px; height: 20px; }
.s22 { width: 22px; height: 22px; }
.s40 { width: 40px; height: 40px; }
.arr { display: block; flex: none; border: 4px solid transparent; border-top-color: #000; border-bottom: 0; }
.letter { font: bold 13px "Liberation Sans", sans-serif; fill: #c8101a; stroke: #c8101a; }
.cube { font: bold 17px "Liberation Sans", sans-serif; fill: #d9eab4; stroke: #36530f; }
.cube.dark { font-size: 19px; fill: #2f4d0c; stroke: none; }
.units { font: bold 13px/13px "Liberation Sans", sans-serif; fill: #3d7612; }

.title { height: 38px; flex: none; display: flex; align-items: center; background: #fff; padding-left: 10px; }
.title h1 { flex: 1; margin-left: 5px; font: 16px/20px "Noto Sans", sans-serif; color: #000; }
.winbtns { display: flex; }
.winbtns button { width: 58px; display: grid; place-items: center; }

.quick { position: relative; height: 27px; flex: none; display: flex; align-items: center; gap: 10px; padding-left: 6px; background: linear-gradient(#d9dbe3, #bfc2cb 22%, #d3d6de); border-bottom: 1px solid #b0b3bb; }
.quick .bar { width: 2px; height: 16px; background: #555; border-right: 1px solid #fff; margin: 0 -5px; }
.qright { margin-left: auto; display: flex; align-items: center; gap: 10px; padding-right: 4px; }
.qright input { width: 167px; height: 25px; margin-right: 3px; border: 2px solid #85888f; background: #fff; font: inherit; padding: 0 2px; outline: 0; }
.qright input::placeholder { color: #8c8c8c; opacity: 1; }
.help { width: 20px; height: 20px; margin-left: 7px; border-radius: 50%; background: #84bd32; color: #fff; font: bold 15px/20px "Liberation Sans", sans-serif; }
.context { position: absolute; left: 789px; top: 0; width: 135px; height: 36px; padding: 6px 8px; border: 1px solid; border-width: 2px 1px 0; border-image: linear-gradient(#4b9b83, transparent) 1; background: linear-gradient(#7db3a3, #a9c6c0 60%, transparent); color: #fff; font-size: 15px; font-weight: bold; line-height: 16px; }

.tabs { height: 28px; flex: none; display: flex; align-items: flex-end; gap: 1px; padding-left: 5px; background: linear-gradient(90deg, #c1c4cc, #c6c9d1 45%, #d6d9e2 70%); }
.appmenu { width: 71px; height: 25px; margin-right: 21px; padding-left: 16px; border: 1px solid #4a8a46; border-bottom: 0; border-radius: 5px 5px 0 0; background: linear-gradient(#85c07c, #46963f 45%, #62ad59); }
.tab { height: 24px; padding: 0 11px; line-height: 24px; color: #444; white-space: nowrap; }
.tab.on { color: #222; background: linear-gradient(#fff, #eef1fa); border-radius: 5px 5px 0 0; }

.ribbon { height: 114px; flex: none; display: flex; gap: 4px; padding: 3px 5px; background: linear-gradient(#eaedf7, #eef1fb 20%, #dfe2ec 60%, #eef1fa); border-bottom: 1px solid #b9bcc6; }
.group { display: flex; flex-direction: column; border: 2px solid #f7f8fc; outline: 1px solid #c3c6cf; outline-offset: -1px; border-radius: 6px; overflow: hidden; background: linear-gradient(#f0f1f8, #dbdde6 12px, #c3c6ce 12px, #eff2fb 86px); white-space: nowrap; }
.file { width: 345px; } .create { width: 110px; } .model { width: 129px; } .mesh { width: 135px; } .script { width: 212px; } .ext { width: 150px; } .run { width: 228px; }
.body { flex: 1; display: flex; padding-top: 5px; }
.group h2 { position: relative; height: 19px; flex: none; background: #bfc2ca; text-align: center; line-height: 20px; color: #111; }
.launcher { position: absolute; right: 3px; top: 5px; }
.big { position: relative; flex: none; align-self: flex-start; text-align: center; color: #4c4f57; }
.big .s40 { margin: 0 auto 2px; }
.w52 { width: 52px; } .w58 { width: 58px; } .w60 { width: 60px; } .w66 { width: 66px; } .w76 { width: 76px; } .w82 { width: 82px; } .w88 { width: 88px; }
.corner { position: absolute; right: 0; bottom: -1px; }
.sep { width: 2px; height: 78px; margin-top: -2px; background: #a9acb5; border-right: 1px solid #fff; }
.col { display: flex; flex-direction: column; gap: 16px; padding: 11px 0 0 6px; }
.row { display: flex; align-items: center; gap: 5px; height: 20px; color: #3e4148; }
.row .arr { margin-left: -3px; }
.create .row .arr { margin-left: 2px; }
.three { gap: 8px; padding-top: 0; padding-left: 7px; margin-top: -1px; }
.two { padding-left: 10px; padding-right: 4px; }

.work { flex: 1; min-height: 0; display: flex; }
.side { width: 382px; flex: none; display: flex; flex-direction: column; border-right: 1px solid #b4b7c0; }
.phead { height: 31px; flex: none; display: flex; align-items: center; gap: 10px; padding: 0 5px 0 7px; background: linear-gradient(#f2f4fb, #dcdee7 35%, #c6c9d1 50%, #d9dbe4 75%, #eceef6); }
.phead.first { height: 32px; padding-left: 8px; gap: 17px; }
.phead h2, .ptabs .on, .bold { font-size: 15px; font-weight: bold; }
.phead h2 { flex: 1; color: #3f4147; }
.phead button { display: flex; align-items: center; gap: 8px; }
.configs { height: 79px; flex: none; background: #fff; border: 2px solid #9699a3; border-left-width: 1px; color: #000; }
.configs li { display: flex; align-items: center; gap: 7px; height: 22px; padding-left: 4px; }
.configs .sel { background: #3399ff; }
.sel svg { opacity: .75; }
.ptabs { height: 29px; flex: none; display: flex; align-items: flex-end; gap: 2px; padding-left: 1px; border-bottom: 1px solid #c0c3cc; }
.ptabs button { width: 128px; height: 23px; border-radius: 5px 5px 0 0; border: 1px solid #c0c3cc; border-bottom: 0; background: linear-gradient(#eceef6, #c9ccd4 50%, #e2e4ec); }
.ptabs .on { width: 135px; border-color: #a0d59a; background: linear-gradient(#8bcc80, #6dc05f 45%, #acd8a5); }
.treebox { flex: 1; min-height: 0; display: flex; margin-top: -2px; background: #fff; border: 2px solid #9699a3; border-left-width: 1px; color: #000; }
.tree { flex: 1; min-width: 0; padding: 1px 0 0 1px; }
.tree li { display: flex; align-items: center; height: 15px; white-space: nowrap; }
.tree li.tall { height: 22px; }
.tree span { margin-left: 2px; overflow: hidden; }
.ti { margin-right: 5px; margin-left: 2px; }
.scroll { width: 19px; flex: none; background: #f0f0f0; display: flex; flex-direction: column; justify-content: space-between; align-items: center; padding: 7px 0 6px; }

.view { flex: 1; min-width: 0; display: flex; flex-direction: column; padding-left: 2px; border-left: 1px solid #d5d7df; }
.vtabs { height: 30px; flex: none; display: flex; align-items: flex-end; border-bottom: 1px solid #b4b7c0; padding-left: 1px; }
.vtab { display: flex; align-items: center; width: 195px; height: 26px; padding: 0 6px 0 3px; border-radius: 5px 5px 0 0; border: 1px solid #94cf8b; border-bottom: 0; background: linear-gradient(#a3d59c, #69bf5c 45%, #add9a6); }
.vtab span { flex: 1; text-align: center; }
.scene { flex: 1; min-height: 0; width: 100%; background: #fff; }
.axis { font: 31px "Liberation Mono", monospace; }

.status { height: 35px; flex: none; display: flex; align-items: center; border-top: 2px solid #d5d7de; background: linear-gradient(#c5c7ce, #b4b6be 40%, #a0a2aa); color: #111; position: relative; }
.cell { height: 29px; display: flex; align-items: center; gap: 8px; border-right: 1px solid #d8dae0; padding-left: 4px; white-space: nowrap; flex: none; }
.cell button { display: flex; align-items: center; justify-content: center; gap: 7px; height: 28px; }
.c1 { width: 432px; } .c2 { width: 37px; padding-left: 9px; } .c3 { width: 70px; } .c4 { width: 165px; gap: 2px; } .c5 { width: 70px; } .c6 { width: 113px; gap: 6px; } .c7 { width: 69px; } .c8 { width: 248px; gap: 9px; } .c9 { width: 70px; }
.c4 button { width: 28px; }
.c4 span + button { margin-left: -2px; }
.c4 .on { border: 1px solid #d5dcc0; border-radius: 3px; background: #9bb89a; }
.c6 button + button { margin-left: 4px; }
.c8 span { margin-right: -6px; }
.unit { width: 63px; color: #333; }
.grip { position: absolute; right: 2px; bottom: 2px; }
</style>
